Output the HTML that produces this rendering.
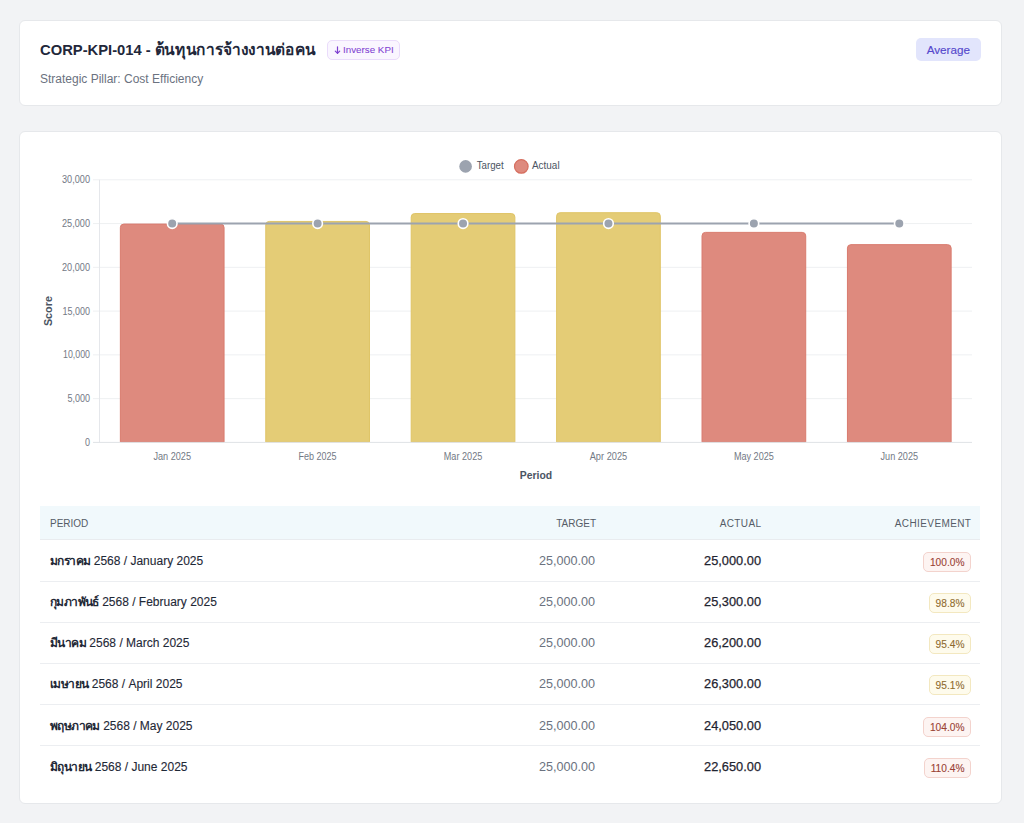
<!DOCTYPE html>
<html><head><meta charset="utf-8">
<style>
html,body{margin:0;padding:0;}
body{width:1024px;height:823px;background:#f2f3f5;position:relative;overflow:hidden;font-family:"Liberation Sans",sans-serif;color:#1f2937;}
.card{position:absolute;background:#fff;border:1px solid #e6e8eb;border-radius:6px;box-sizing:border-box;}
.abs{position:absolute;white-space:nowrap;}
.title{left:40px;top:40.5px;font-size:15.3px;font-weight:700;color:#22273a;line-height:18px;transform:scaleX(0.965);transform-origin:0 0;}
.pillar{left:40px;top:71.5px;font-size:12px;color:#6b7280;line-height:14px;}
.inv{left:327px;top:40px;width:73px;height:19.5px;box-sizing:border-box;border:1px solid #eadcfb;background:#faf6ff;border-radius:5px;color:#7f3fd2;font-size:9.8px;line-height:17.5px;-webkit-text-stroke:0.05px #7f3fd2;}
.avg{left:916px;top:38px;width:64.7px;height:23px;background:#e2e5fc;border-radius:5px;color:#5548cc;font-size:11.7px;-webkit-text-stroke:0.15px #5548cc;line-height:23px;text-align:center;}
svg text{font-family:"Liberation Sans",sans-serif;}
.th{position:absolute;top:506px;left:40px;width:940px;height:34px;background:#f1f9fc;border-bottom:1px solid #e9ecef;box-sizing:border-box;}
.hd{position:absolute;top:517.8px;font-size:10px;font-weight:400;letter-spacing:0px;color:#555c67;line-height:11px;white-space:nowrap;}
.row{position:absolute;left:40px;width:940px;height:41px;border-bottom:1px solid #eceef1;box-sizing:border-box;}
.cell{position:absolute;font-size:12px;line-height:14px;white-space:nowrap;}
.p{left:10px;top:calc(12px + var(--o));color:#1f2937;-webkit-text-stroke:0.12px #1f2937;}
.th2{letter-spacing:-0.6px;font-weight:700;-webkit-text-stroke:0;}
.t{right:385px;top:calc(11.8px + var(--o));color:#6b7280;font-size:12.6px;}
.a{right:219px;top:calc(11.7px + var(--o));color:#1f2430;font-weight:400;-webkit-text-stroke:0.25px #1f2430;font-size:12.8px;}
.b{right:9px;top:calc(9.5px + var(--o));height:20.5px;box-sizing:border-box;border-radius:5px;font-size:10.2px;-webkit-text-stroke:0.1px currentColor;line-height:17px;padding:1.5px 5.5px 0;border:1px solid;}
.red{background:#fdf4f2;border-color:#f3d3cd;color:#9a4234;}
.yel{background:#fefbec;border-color:#f3e8c0;color:#8f6b2e;}
</style></head>
<body>
<div class="card" style="left:19px;top:20px;width:983px;height:86px;"></div>
<div class="abs title">CORP-KPI-014 - <span style="font-size:16px">ต้นทุนการจ้างงานต่อคน</span></div>
<div class="abs inv"><svg style="position:absolute;left:5.6px;top:4.6px" width="7" height="9" viewBox="0 0 7 9"><path d="M3.5 0.8V7.4M1.3 5.2L3.5 7.4L5.7 5.2" stroke="#7e3fd0" stroke-width="1.2" fill="none" stroke-linecap="round" stroke-linejoin="round"/></svg><span style="position:absolute;left:15px;top:0px;line-height:17px">Inverse KPI</span></div>
<div class="abs pillar">Strategic Pillar: Cost Efficiency</div>
<div class="abs avg">Average</div>

<div class="card" style="left:19px;top:131px;width:983px;height:673px;"></div>

<svg class="abs" style="left:0;top:0" width="1024" height="500" viewBox="0 0 1024 500">
  <!-- legend -->
  <circle cx="465.6" cy="166.4" r="6.3" fill="#9ca3af"/>
  <text x="476.7" y="168.6" font-size="10.4" textLength="27" lengthAdjust="spacingAndGlyphs" fill="#4b5563">Target</text>
  <circle cx="521.3" cy="166.4" r="6.8" fill="#de8a7e" stroke="#d66f60" stroke-width="1.2"/>
  <text x="532" y="168.6" font-size="10.4" textLength="27.6" lengthAdjust="spacingAndGlyphs" fill="#4b5563">Actual</text>
  <!-- grid -->
  <g stroke="#eef0f2" stroke-width="1">
    <line x1="93" y1="179.8" x2="972" y2="179.8"/>
    <line x1="93" y1="223.57" x2="972" y2="223.57"/>
    <line x1="93" y1="267.33" x2="972" y2="267.33"/>
    <line x1="93" y1="311.1" x2="972" y2="311.1"/>
    <line x1="93" y1="354.87" x2="972" y2="354.87"/>
    <line x1="93" y1="398.63" x2="972" y2="398.63"/>
  </g>
  <line x1="99.5" y1="179.8" x2="99.5" y2="442.4" stroke="#e5e7eb" stroke-width="1"/>
  
  <!-- y labels -->
  <g font-size="10.2" fill="#737985" text-anchor="end">
    <text x="90" y="183.2" textLength="28" lengthAdjust="spacingAndGlyphs">30,000</text>
    <text x="90" y="227" textLength="28" lengthAdjust="spacingAndGlyphs">25,000</text>
    <text x="90" y="270.7" textLength="28" lengthAdjust="spacingAndGlyphs">20,000</text>
    <text x="90" y="314.5" textLength="27.5" lengthAdjust="spacingAndGlyphs">15,000</text>
    <text x="90" y="358.3" textLength="27" lengthAdjust="spacingAndGlyphs">10,000</text>
    <text x="90" y="402" textLength="22.5" lengthAdjust="spacingAndGlyphs">5,000</text>
    <text x="90" y="445.8" textLength="5" lengthAdjust="spacingAndGlyphs">0</text>
  </g>
  <text transform="translate(51.5,311.1) rotate(-90)" text-anchor="middle" font-size="10.8" font-weight="700" fill="#4b5563">Score</text>
  <!-- bars -->
  <g stroke-width="1">
    <path d="M120.36 442 V227.57 Q120.36 224.07 123.86 224.07 H220.56 Q224.06 224.07 224.06 227.57 V442 Z" fill="#de8a7e" stroke="#d97b6e"/>
    <path d="M265.77 442 V224.94 Q265.77 221.44 269.27 221.44 H365.97 Q369.47 221.44 369.47 224.94 V442 Z" fill="#e4cc76" stroke="#dfc466"/>
    <path d="M411.19 442 V217.06 Q411.19 213.56 414.69 213.56 H511.39 Q514.89 213.56 514.89 217.06 V442 Z" fill="#e4cc76" stroke="#dfc466"/>
    <path d="M556.61 442 V216.19 Q556.61 212.69 560.11 212.69 H656.81 Q660.31 212.69 660.31 216.19 V442 Z" fill="#e4cc76" stroke="#dfc466"/>
    <path d="M702.02 442 V235.88 Q702.02 232.38 705.52 232.38 H802.22 Q805.72 232.38 805.72 235.88 V442 Z" fill="#de8a7e" stroke="#d97b6e"/>
    <path d="M847.44 442 V248.14 Q847.44 244.64 850.94 244.64 H947.64 Q951.14 244.64 951.14 248.14 V442 Z" fill="#de8a7e" stroke="#d97b6e"/>
  </g>
  <line x1="93" y1="442.4" x2="972" y2="442.4" stroke="#dfe2e6" stroke-width="1"/>
  <!-- target line -->
  <polyline points="172.21,223.57 899.29,223.57" stroke="#9ca3af" stroke-width="2" fill="none"/>
  <g fill="#9ca3af" stroke="#fff" stroke-width="1.6">
    <circle cx="172.21" cy="223.57" r="4.8"/>
    <circle cx="317.62" cy="223.57" r="4.8"/>
    <circle cx="463.04" cy="223.57" r="4.8"/>
    <circle cx="608.46" cy="223.57" r="4.8"/>
    <circle cx="753.88" cy="223.57" r="4.8"/>
    <circle cx="899.29" cy="223.57" r="4.8"/>
  </g>
  <!-- x labels -->
  <g font-size="10.2" fill="#737985" text-anchor="middle">
    <text x="172.21" y="460.3" textLength="37.6" lengthAdjust="spacingAndGlyphs">Jan 2025</text>
    <text x="317.62" y="460.3" textLength="38" lengthAdjust="spacingAndGlyphs">Feb 2025</text>
    <text x="463.04" y="460.3" textLength="38.5" lengthAdjust="spacingAndGlyphs">Mar 2025</text>
    <text x="608.46" y="460.3" textLength="37.5" lengthAdjust="spacingAndGlyphs">Apr 2025</text>
    <text x="753.88" y="460.3" textLength="40" lengthAdjust="spacingAndGlyphs">May 2025</text>
    <text x="899.29" y="460.3" textLength="37.5" lengthAdjust="spacingAndGlyphs">Jun 2025</text>
  </g>
  <text x="536" y="478.9" text-anchor="middle" font-size="10.4" font-weight="700" fill="#4b5563">Period</text>
</svg>

<div class="th"></div>
<div class="hd" style="left:50px;">PERIOD</div>
<div class="hd" style="right:428px;">TARGET</div>
<div class="hd" style="right:263px;letter-spacing:0.35px;margin-right:-0.35px">ACTUAL</div>
<div class="hd" style="right:53px;letter-spacing:0.4px;margin-right:-0.4px">ACHIEVEMENT</div>

<div class="row" style="--o:1px;top:541px;"><span class="cell p"><span class="th2">มกราคม</span> 2568 / January 2025</span><span class="cell t">25,000.00</span><span class="cell a">25,000.00</span><span class="cell b red">100.0%</span></div>
<div class="row" style="--o:1px;top:582px;"><span class="cell p"><span class="th2">กุมภาพันธ์</span> 2568 / February 2025</span><span class="cell t">25,000.00</span><span class="cell a">25,300.00</span><span class="cell b yel">98.8%</span></div>
<div class="row" style="--o:1px;top:623px;"><span class="cell p"><span class="th2">มีนาคม</span> 2568 / March 2025</span><span class="cell t">25,000.00</span><span class="cell a">26,200.00</span><span class="cell b yel">95.4%</span></div>
<div class="row" style="--o:1px;top:664px;"><span class="cell p"><span class="th2">เมษายน</span> 2568 / April 2025</span><span class="cell t">25,000.00</span><span class="cell a">26,300.00</span><span class="cell b yel">95.1%</span></div>
<div class="row" style="--o:2px;top:705px;"><span class="cell p"><span class="th2">พฤษภาคม</span> 2568 / May 2025</span><span class="cell t">25,000.00</span><span class="cell a">24,050.00</span><span class="cell b red">104.0%</span></div>
<div class="row" style="--o:2px;top:746px;border-bottom:none;"><span class="cell p"><span class="th2">มิถุนายน</span> 2568 / June 2025</span><span class="cell t">25,000.00</span><span class="cell a">22,650.00</span><span class="cell b red">110.4%</span></div>
</body></html>
